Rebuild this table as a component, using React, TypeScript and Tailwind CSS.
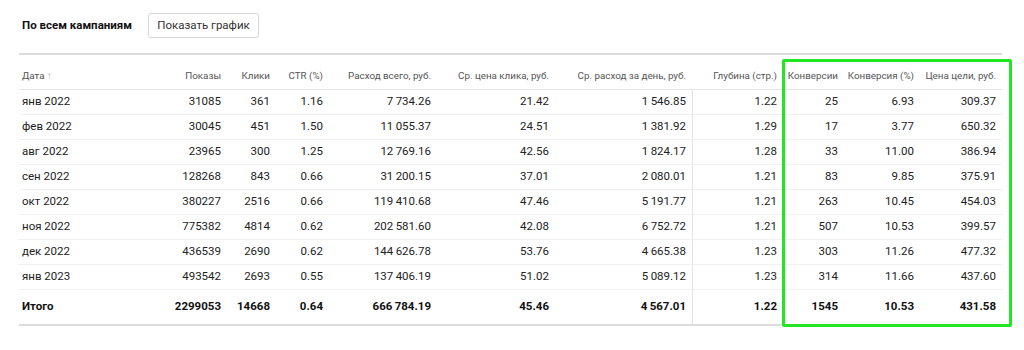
import React from "react";

const rows: string[][] = [
  ["янв 2022", "31085", "361", "1.16", "7 734.26", "21.42", "1 546.85", "1.22", "25", "6.93", "309.37"],
  ["фев 2022", "30045", "451", "1.50", "11 055.37", "24.51", "1 381.92", "1.29", "17", "3.77", "650.32"],
  ["авг 2022", "23965", "300", "1.25", "12 769.16", "42.56", "1 824.17", "1.28", "33", "11.00", "386.94"],
  ["сен 2022", "128268", "843", "0.66", "31 200.15", "37.01", "2 080.01", "1.21", "83", "9.85", "375.91"],
  ["окт 2022", "380227", "2516", "0.66", "119 410.68", "47.46", "5 191.77", "1.21", "263", "10.45", "454.03"],
  ["ноя 2022", "775382", "4814", "0.62", "202 581.60", "42.08", "6 752.72", "1.21", "507", "10.53", "399.57"],
  ["дек 2022", "436539", "2690", "0.62", "144 626.78", "53.76", "4 665.38", "1.23", "303", "11.26", "477.32"],
  ["янв 2023", "493542", "2693", "0.55", "137 406.19", "51.02", "5 089.12", "1.23", "314", "11.66", "437.60"],
];

const total = ["Итого", "2299053", "14668", "0.64", "666 784.19", "45.46", "4 567.01", "1.22", "1545", "10.53", "431.58"];

const headers = [
  "Показы",
  "Клики",
  "CTR (%)",
  "Расход всего, руб.",
  "Ср. цена клика, руб.",
  "Ср. расход за день, руб.",
  "Глубина (стр.)",
  "Конверсии",
  "Конверсия (%)",
  "Цена цели, руб.",
];

const grid =
  "grid grid-cols-[141px_67px_49px_53px_108px_118px_137px_91px_61px_76px_82px]";

function cellCls(i: number) {
  let c = "text-right pr-[6px] whitespace-nowrap";
  if (i === 7 || i === 8) c += " border-l border-[#e3e3e3] self-stretch flex items-center justify-end";
  return c;
}

export default function App() {
  return (
    <div
      className="relative w-[1024px] h-[350px] bg-white text-[#222]"
      style={{ fontFamily: 'Roboto, "Open Sans", sans-serif' }}
    >
      <div className="pl-[19px] w-[1002px]">
        <div className="flex items-center h-[53px] pb-[2px]">
          <div className="pl-[3px] text-[11.5px] font-bold text-[#111] w-[129px] whitespace-nowrap">По всем кампаниям</div>
          <button className="h-[25px] w-[111px] border border-[#d6d6d6] rounded-[3px] text-[11.5px] text-[#333] bg-white">
            Показать график
          </button>
        </div>
        <div className="border-t-2 border-[#dcdcdc]">
          <div className={`${grid} h-[35px] items-end pb-[6px] border-b border-[#e6e6e6] text-[9.8px] leading-[14px] text-[#555]`}>
            <div className="pl-[3px]">
              Дата <span className="text-[#aaa]">↑</span>
            </div>
            {headers.map((h) => (
              <div key={h} className="text-right pr-[6px] whitespace-nowrap">
                {h}
              </div>
            ))}
          </div>
          {rows.map((r, ri) => (
            <div
              key={ri}
              className={`${grid} h-[25px] items-center border-b border-[#f1f1f1] text-[11.5px] text-[#222]`}
            >
              {r.map((v, i) =>
                i === 0 ? (
                  <div key={i} className="pl-[3px]">
                    {v}
                  </div>
                ) : (
                  <div key={i} className={cellCls(i)}>
                    {v.replace(" ", "\u2009")}
                  </div>
                )
              )}
            </div>
          ))}
          <div className={`${grid} h-[36px] items-center border-b-2 border-[#dcdcdc] text-[11.5px] font-bold text-[#111]`}>
            {total.map((v, i) =>
              i === 0 ? (
                <div key={i} className="pl-[3px]">
                  {v}
                </div>
              ) : (
                <div key={i} className={cellCls(i)}>
                  {v.replace(" ", "\u2009")}
                </div>
              )
            )}
          </div>
        </div>
      </div>
      <div className="absolute left-[782px] top-[59px] w-[230px] h-[268px] border-[3px] border-[#22e622] rounded-[2px] pointer-events-none" />
    </div>
  );
}
